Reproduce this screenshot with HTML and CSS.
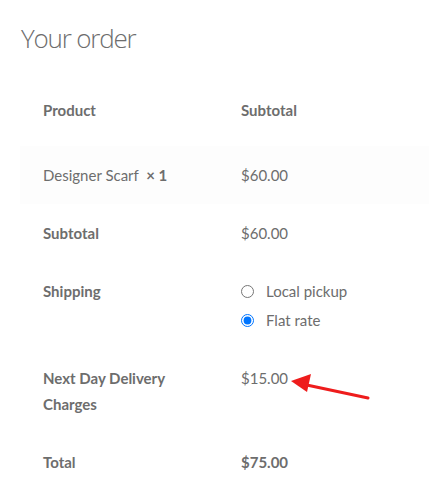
FILE: index.html
```html
<!DOCTYPE html>
<html>
<head>
<meta charset="utf-8">
<link rel="stylesheet" href="styles.css">
</head>
<body>
<div class="page">
  <h3 class="title">Your order</h3>
  <table class="order">
    <thead>
      <tr><th class="label">Product</th><th>Subtotal</th></tr>
    </thead>
    <tbody>
      <tr class="item"><td class="label">Designer Scarf&nbsp; <strong>×&nbsp;1</strong></td><td>$60.00</td></tr>
    </tbody>
    <tfoot>
      <tr><th class="label">Subtotal</th><td>$60.00</td></tr>
      <tr><th class="label">Shipping</th><td>
        <ul class="methods">
          <li><input type="radio" name="ship" id="lp"><label for="lp">Local pickup</label></li>
          <li><input type="radio" name="ship" id="fr" checked><label for="fr">Flat rate</label></li>
        </ul>
      </td></tr>
      <tr><th class="label">Next Day Delivery Charges</th><td>$15.00</td></tr>
      <tr><th class="label">Total</th><td><strong>$75.00</strong></td></tr>
    </tfoot>
  </table>
  <svg class="arrow" width="429" height="501" viewBox="0 0 429 501">
    <line x1="368" y1="398" x2="302" y2="384" stroke="#ee1c1c" stroke-width="3" stroke-linecap="round"/>
    <polygon points="291,381 311,374 307,392" fill="#ee1c1c"/>
  </svg>
</div>
</body>
</html>
```

FILE: styles.css
```css
html, body { margin: 0; padding: 0; background: #fff; }
body {
  font-family: "Lato", "Liberation Sans", sans-serif;
  color: #6d6d6d;
  font-size: 15px;
}
.page { position: relative; padding-left: 20px; width: 409px; height: 501px; }
.title {
  margin: 0 0 0 1px;
  padding-top: 23px;
  height: 81px;
  box-sizing: border-box;
  font-family: "Open Sans", "Liberation Sans", sans-serif;
  font-weight: 300;
  font-size: 26px;
  letter-spacing: -1.2px;
  line-height: 30px;
  color: #6d6d6d;
}
.order { width: 409px; border-collapse: collapse; table-layout: fixed; }
.order th, .order td {
  text-align: left;
  vertical-align: top;
  padding: 16px 23px;
  line-height: 26px;
}
.order th { font-weight: 700; }
.order .label { width: 152px; }
.order thead th { padding-bottom: 23px; }
.order tr.item td { background: #fdfdfd; }
.order td strong { font-weight: 700; }
.methods { list-style: none; margin: 0; padding: 0; }
.methods li { display: flex; align-items: center; height: 26px; margin-bottom: 3px; }
.methods li:last-child { margin-bottom: 0; }
.methods input { margin: 0 12px 0 0; width: 13px; height: 13px; }
.arrow { position: absolute; left: 0; top: 0; pointer-events: none; }
```
